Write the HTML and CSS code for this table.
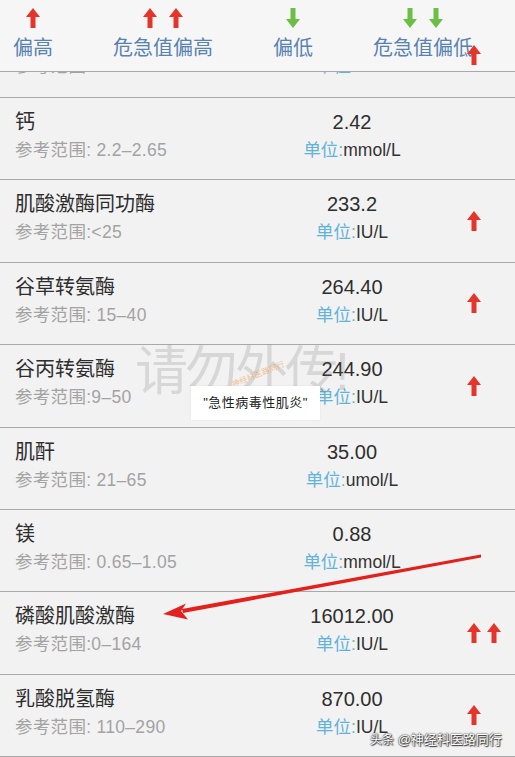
FILE: index.html
```html
<!DOCTYPE html>
<html lang="zh-CN">
<head>
  <meta charset="UTF-8">
  <meta name="viewport" content="width=device-width, initial-scale=1.0">
  <title>检验结果</title>
  <link rel="stylesheet" href="styles.css">
</head>
<body>
  <div class="page">
    <div class="legend">
      <div class="legend-item">
        <div class="arrows"><svg class="arrow up" viewBox="0 0 14 20"><polygon points="7,0 14,9 9.5,9 9.5,20 4.5,20 4.5,9 0,9"/></svg></div>
        <span>偏高</span>
      </div>
      <div class="legend-item">
        <div class="arrows wide">
          <svg class="arrow up" viewBox="0 0 14 20"><polygon points="7,0 14,9 9.5,9 9.5,20 4.5,20 4.5,9 0,9"/></svg>
          <svg class="arrow up" viewBox="0 0 14 20"><polygon points="7,0 14,9 9.5,9 9.5,20 4.5,20 4.5,9 0,9"/></svg>
        </div>
        <span>危急值偏高</span>
      </div>
      <div class="legend-item">
        <div class="arrows"><svg class="arrow down" viewBox="0 0 14 20"><polygon points="7,20 14,11 9.5,11 9.5,0 4.5,0 4.5,11 0,11"/></svg></div>
        <span>偏低</span>
      </div>
      <div class="legend-item">
        <div class="arrows wide">
          <svg class="arrow down" viewBox="0 0 14 20"><polygon points="7,20 14,11 9.5,11 9.5,0 4.5,0 4.5,11 0,11"/></svg>
          <svg class="arrow down" viewBox="0 0 14 20"><polygon points="7,20 14,11 9.5,11 9.5,0 4.5,0 4.5,11 0,11"/></svg>
        </div>
        <span>危急值偏低</span>
      </div>
    </div>

    <div class="list">
      <div class="row-clip">
        <div class="row cut">
          <div class="name-col">
            <div class="name">尿酸</div>
            <div class="range">参考范围: 42–132</div>
          </div>
          <div class="value-col">
            <div class="value">140.00</div>
            <div class="unit"><em>单位:</em>IU/L</div>
          </div>
          <div class="flag-col"></div>
        </div>
      </div>

      <div class="row">
        <div class="name-col">
          <div class="name">钙</div>
          <div class="range">参考范围: 2.2–2.65</div>
        </div>
        <div class="value-col">
          <div class="value">2.42</div>
          <div class="unit"><em>单位:</em>mmol/L</div>
        </div>
        <div class="flag-col"></div>
      </div>

      <div class="row">
        <div class="name-col">
          <div class="name">肌酸激酶同功酶</div>
          <div class="range">参考范围:&lt;25</div>
        </div>
        <div class="value-col">
          <div class="value">233.2</div>
          <div class="unit"><em>单位:</em>IU/L</div>
        </div>
        <div class="flag-col"><svg class="arrow up" viewBox="0 0 14 20"><polygon points="7,0 14,9 9.5,9 9.5,20 4.5,20 4.5,9 0,9"/></svg></div>
      </div>

      <div class="row">
        <div class="name-col">
          <div class="name">谷草转氨酶</div>
          <div class="range">参考范围: 15–40</div>
        </div>
        <div class="value-col">
          <div class="value">264.40</div>
          <div class="unit"><em>单位:</em>IU/L</div>
        </div>
        <div class="flag-col"><svg class="arrow up" viewBox="0 0 14 20"><polygon points="7,0 14,9 9.5,9 9.5,20 4.5,20 4.5,9 0,9"/></svg></div>
      </div>

      <div class="row">
        <div class="name-col">
          <div class="name">谷丙转氨酶</div>
          <div class="range">参考范围:9–50</div>
        </div>
        <div class="value-col">
          <div class="value">244.90</div>
          <div class="unit"><em>单位:</em>IU/L</div>
        </div>
        <div class="flag-col"><svg class="arrow up" viewBox="0 0 14 20"><polygon points="7,0 14,9 9.5,9 9.5,20 4.5,20 4.5,9 0,9"/></svg></div>
      </div>

      <div class="row">
        <div class="name-col">
          <div class="name">肌酐</div>
          <div class="range">参考范围: 21–65</div>
        </div>
        <div class="value-col">
          <div class="value">35.00</div>
          <div class="unit"><em>单位:</em>umol/L</div>
        </div>
        <div class="flag-col"></div>
      </div>

      <div class="row">
        <div class="name-col">
          <div class="name">镁</div>
          <div class="range">参考范围: 0.65–1.05</div>
        </div>
        <div class="value-col">
          <div class="value">0.88</div>
          <div class="unit"><em>单位:</em>mmol/L</div>
        </div>
        <div class="flag-col"></div>
      </div>

      <div class="row">
        <div class="name-col">
          <div class="name">磷酸肌酸激酶</div>
          <div class="range">参考范围:0–164</div>
        </div>
        <div class="value-col">
          <div class="value">16012.00</div>
          <div class="unit"><em>单位:</em>IU/L</div>
        </div>
        <div class="flag-col">
          <svg class="arrow up" viewBox="0 0 14 20"><polygon points="7,0 14,9 9.5,9 9.5,20 4.5,20 4.5,9 0,9"/></svg>
          <svg class="arrow up" viewBox="0 0 14 20"><polygon points="7,0 14,9 9.5,9 9.5,20 4.5,20 4.5,9 0,9"/></svg>
        </div>
      </div>

      <div class="row">
        <div class="name-col">
          <div class="name">乳酸脱氢酶</div>
          <div class="range">参考范围: 110–290</div>
        </div>
        <div class="value-col">
          <div class="value">870.00</div>
          <div class="unit"><em>单位:</em>IU/L</div>
        </div>
        <div class="flag-col"><svg class="arrow up" viewBox="0 0 14 20"><polygon points="7,0 14,9 9.5,9 9.5,20 4.5,20 4.5,9 0,9"/></svg></div>
      </div>
    </div>

    <!-- overlays on top of the screenshot -->
    <svg class="arrow up stray" viewBox="0 0 14 20"><polygon points="7,0 14,9 9.5,9 9.5,20 4.5,20 4.5,9 0,9"/></svg>
    <div class="watermark">请勿外传!</div>
    <div class="stamp">神经科医路同行</div>
    <div class="note">"急性病毒性肌炎"</div>
    <svg class="pointer" width="515" height="757" viewBox="0 0 515 757">
      <polygon points="481,554.5 481,557.5 183,613 182,609" fill="#e3201b"/>
      <polygon points="163,614 186,603.5 181,611 188,619.5" fill="#e3201b"/>
    </svg>
    <div class="credit"><small>头条</small> @神经科医路同行</div>
  </div>
</body>
</html>
```

FILE: styles.css
```css
body {
  margin: 0;
  font-family: "Liberation Sans", "Noto Sans CJK SC", sans-serif;
  background-color: #f2f2f2;
  color: #333;
}

.page {
  position: relative;
  width: 515px;
  height: 757px;
  overflow: hidden;
}

/* legend bar */
.legend {
  display: flex;
  gap: 60px;
  height: 71px;
  padding-left: 13px;
  background-color: #f6f6f6;
  border-bottom: 1px solid #a9a9a9;
}

.legend-item {
  display: flex;
  flex-direction: column;
  align-items: center;
  padding-top: 8px;
}

.legend-item span {
  margin-top: 7px;
  font-size: 20px;
  line-height: 26px;
  color: #5882b2;
}

.arrows {
  display: flex;
  gap: 12px;
  height: 20px;
}

.arrow {
  width: 14px;
  height: 20px;
  display: block;
}

.arrow.up polygon {
  fill: #e5342a;
}

.arrow.down polygon {
  fill: #6bbf45;
}

/* result rows */
.row-clip {
  height: 25px;
  overflow: hidden;
  border-bottom: 1px solid #a9a9a9;
}

.row {
  display: grid;
  grid-template-columns: 271px 162px 1fr;
  box-sizing: border-box;
  height: 82.4px;
  border-bottom: 1px solid #a9a9a9;
}

.row.cut {
  margin-top: -58px;
  border-bottom: none;
}

.name-col,
.value-col {
  padding-top: 10px;
}

.name-col {
  padding-left: 15px;
}

.name {
  font-size: 20px;
  line-height: 28px;
  color: #2e2e2e;
}

.range {
  font-size: 17.5px;
  line-height: 28px;
  letter-spacing: 0.3px;
  color: #a3a3a3;
}

.value-col {
  text-align: center;
}

.value {
  font-size: 20px;
  line-height: 28px;
  color: #2e2e2e;
}

.unit {
  font-size: 17.5px;
  line-height: 28px;
  color: #333;
}

.unit em {
  font-style: normal;
  color: #62b3dc;
}

.flag-col {
  display: flex;
  align-items: center;
  gap: 6px;
  padding-left: 34px;
}

/* overlays */
.stray {
  position: absolute;
  left: 467px;
  top: 45px;
}

.watermark {
  position: absolute;
  left: 135px;
  top: 340px;
  font-size: 53px;
  line-height: 64px;
  letter-spacing: -3px;
  color: rgba(110, 110, 110, 0.2);
  white-space: nowrap;
}

.stamp {
  position: absolute;
  left: 230px;
  top: 368px;
  font-size: 8px;
  color: rgba(240, 150, 60, 0.55);
  transform: rotate(-22deg);
  white-space: nowrap;
}

.note {
  position: absolute;
  left: 191px;
  top: 386px;
  width: 129px;
  height: 34px;
  line-height: 34px;
  text-align: center;
  font-size: 13px;
  letter-spacing: 0.5px;
  background-color: #fff;
  color: #222;
  box-shadow: 0 0 2px rgba(0, 0, 0, 0.08);
}

.pointer {
  position: absolute;
  left: 0;
  top: 0;
}

.credit {
  position: absolute;
  left: 370px;
  top: 729px;
  font-size: 13px;
  color: #fff;
  white-space: nowrap;
  text-shadow: 0 0 2px #333, 0 0 1px #333, 1px 1px 1px #444;
}

.credit small {
  font-size: 12px;
}
```
